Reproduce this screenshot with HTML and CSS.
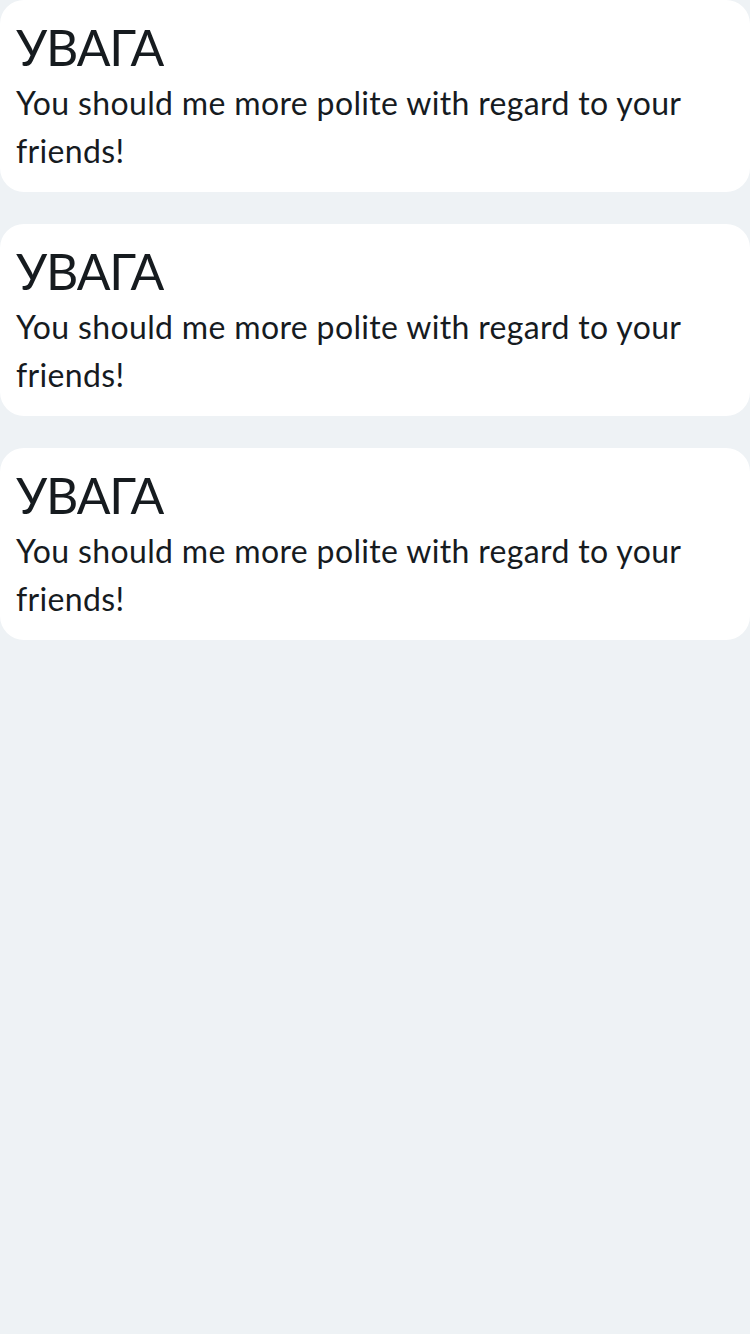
FILE: index.html
```html
<!DOCTYPE html>
<html lang="uk">
<head>
<meta charset="utf-8">
<link rel="stylesheet" href="styles.css">
</head>
<body>
<div class="list">
  <div class="card">
    <h2 class="title">УВАГА</h2>
    <p class="text">You should me more polite with regard to your friends!</p>
  </div>
  <div class="card">
    <h2 class="title">УВАГА</h2>
    <p class="text">You should me more polite with regard to your friends!</p>
  </div>
  <div class="card">
    <h2 class="title">УВАГА</h2>
    <p class="text">You should me more polite with regard to your friends!</p>
  </div>
</div>
</body>
</html>
```
FILE: styles.css
```css
html, body {
  margin: 0;
  padding: 0;
  background: #eef2f5;
  font-family: "Lato", "Noto Sans", sans-serif;
  color: #161b1f;
}
.list {
  display: flex;
  flex-direction: column;
  gap: 32px;
}
.card {
  background: #ffffff;
  border-radius: 24px;
  padding: 16px 16px 17px;
}
.title {
  margin: 0;
  font-size: 50px;
  font-weight: 400;
  line-height: 63px;
  letter-spacing: -1.2px;
}
.text {
  margin: 0;
  font-size: 32px;
  line-height: 48px;
  letter-spacing: 0.35px;
}
```
